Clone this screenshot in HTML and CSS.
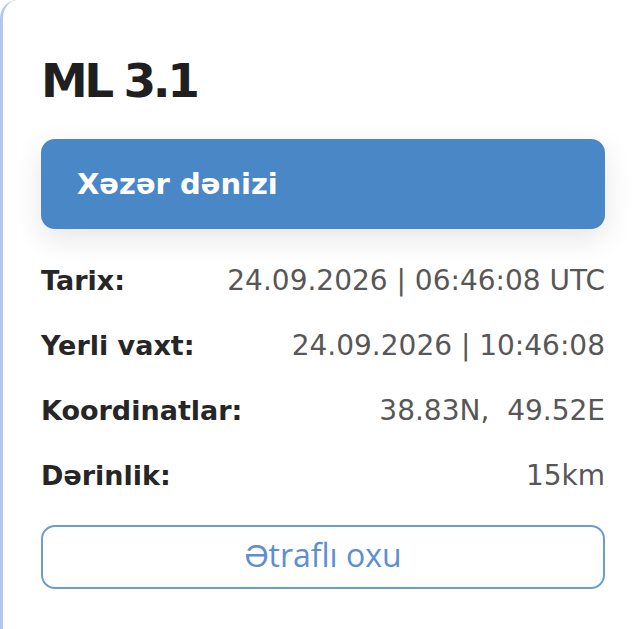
FILE: index.html
```html
<!DOCTYPE html>
<html lang="az">
<head>
    <meta charset="UTF-8">
    <meta name="viewport" content="width=device-width, initial-scale=1.0">
    <title>ML 3.1 - Xəzər dənizi</title>
    <link rel="stylesheet" href="styles.css">
</head>
<body>
    <div class="card">
        <h1 class="magnitude">ML 3.1</h1>
        <div class="region">Xəzər dənizi</div>
        <div class="info">
            <div class="row">
                <span class="label">Tarix:</span>
                <span class="value">24.09.2026 | 06:46:08 UTC</span>
            </div>
            <div class="row">
                <span class="label">Yerli vaxt:</span>
                <span class="value">24.09.2026 | 10:46:08</span>
            </div>
            <div class="row">
                <span class="label">Koordinatlar:</span>
                <span class="value">38.83N,&nbsp; 49.52E</span>
            </div>
            <div class="row">
                <span class="label">Dərinlik:</span>
                <span class="value">15km</span>
            </div>
        </div>
        <a class="more-btn" href="#">Ətraflı oxu</a>
    </div>
</body>
</html>
```

FILE: styles.css
```css
body {
    margin: 0;
    background: #fff;
    font-family: "DejaVu Sans", sans-serif;
}

/* Kart */
.card {
    min-height: 629px;
    box-sizing: border-box;
    border-left: 3px solid #b3c6f1;
    border-radius: 18px 0 0 0;
    padding: 58px 35px 0 38px;
    background: #fff;
}

.magnitude {
    margin: 0;
    font-size: 47px;
    line-height: 46px;
    font-weight: bold;
    letter-spacing: -3.5px;
    color: #1f1f1f;
}

.region {
    display: flex;
    align-items: center;
    height: 90px;
    margin-top: 35px;
    padding-left: 36px;
    border-radius: 14px;
    background: #4a87c6;
    color: #fff;
    font-size: 29px;
    font-weight: bold;
    box-shadow: 0 10px 30px rgba(0, 0, 0, 0.1);
}

.info {
    margin-top: 19px;
}

.row {
    display: flex;
    justify-content: space-between;
    align-items: baseline;
    height: 65px;
    line-height: 65px;
}

.label {
    font-size: 27px;
    font-weight: bold;
    color: #262626;
}

.value {
    font-size: 28px;
    color: #575757;
}

.more-btn {
    display: flex;
    justify-content: center;
    align-items: center;
    height: 64px;
    box-sizing: border-box;
    margin-top: 17px;
    border: 2px solid #6d9bd4;
    border-radius: 14px;
    font-family: "Open Sans", sans-serif;
    font-size: 32px;
    color: #5d8fd0;
    text-decoration: none;
    padding-bottom: 5px;
}
```
